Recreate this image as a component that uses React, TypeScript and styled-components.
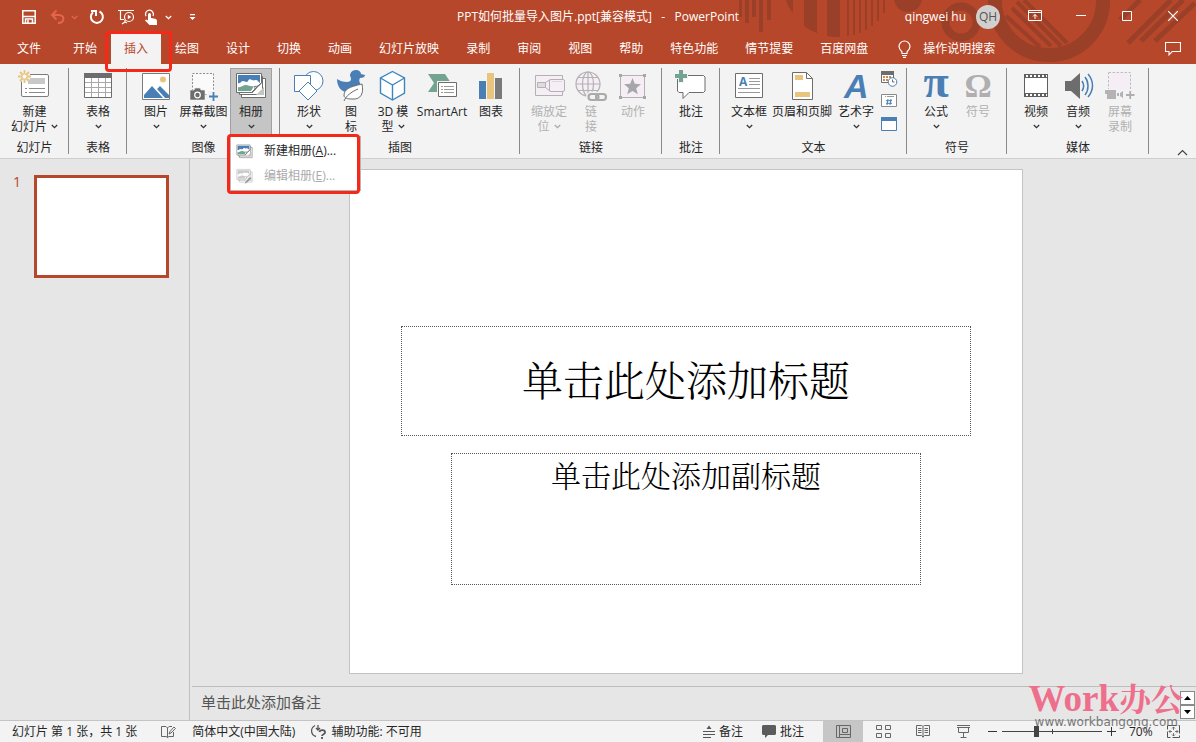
import React from 'react';
import styled, { createGlobalStyle } from 'styled-components';

const brand = '#b7472a';
const brandDark = '#9a3f28';
const blue = '#4a7fb5';
const grey = '#6d6d6d';
const green = '#72a491';
const gold = '#e8c47c';
const faint = '#b4b0b4';
const uiFont = '"Open Sans", "Noto Sans CJK SC", sans-serif';

const GlobalStyle = createGlobalStyle`
  * { box-sizing: border-box; }
  body { margin: 0; background: #e6e6e6; font-family: ${uiFont}; font-size: 12px; line-height: 16px; color: #262626; }
  button, textarea, input { font: inherit; color: inherit; }
  button { background: none; border: 0; padding: 0; cursor: default; white-space: nowrap; }
  svg { display: block; flex: none; }
`;

const Window = styled.div`
  display: flex;
  flex-direction: column;
  height: 100vh;
  min-height: 480px;
  overflow: hidden;
`;

/* ---------- header ---------- */
const Header = styled.header`
  position: relative;
  background: ${brand};
  color: #fff;
`;
const Pattern = styled.svg`
  position: absolute;
  top: 0;
  right: 0;
`;
const TitleBar = styled.div`
  position: relative;
  display: grid;
  grid-template-columns: 1fr auto 1fr;
  height: 33px;
`;
const QuickAccess = styled.div`
  display: flex;
  align-items: center;
  padding-left: 20px;
`;
const QuickButton = styled.button<{ $gap?: number; $dim?: boolean }>`
  margin-right: ${(p) => p.$gap ?? 0}px;
  color: ${(p) => (p.$dim ? '#e2674a' : '#fff')};
`;
const DocTitle = styled.div`
  line-height: 34px;
  white-space: pre;
`;
const WindowControls = styled.div`
  display: flex;
  justify-content: flex-end;
  align-items: center;
`;
const UserName = styled.span`
  margin-right: 10px;
`;
const Avatar = styled.span`
  width: 24px;
  height: 24px;
  margin-right: 12px;
  border-radius: 50%;
  background: #d2d0ce;
  color: #555;
  line-height: 24px;
  text-align: center;
`;
const ControlButton = styled.button`
  display: flex;
  justify-content: center;
  align-items: center;
  width: 46px;
  height: 30px;
  margin-bottom: 3px;
`;
const TabRow = styled.nav`
  position: relative;
  display: flex;
  align-items: stretch;
  gap: 1px;
  height: 31px;
  padding-left: 4px;
`;
const Tab = styled.button<{ $active?: boolean; $first?: boolean }>`
  position: relative;
  padding: 0 13px;
  margin-right: ${(p) => (p.$first ? 5 : 0)}px;
  background: ${(p) => (p.$active ? '#f3f3f3' : 'transparent')};
  color: ${(p) => (p.$active ? brand : '#fff')};
`;
const TabMark = styled.span`
  position: absolute;
  inset: -2px -11px -8px -6px;
  z-index: 3;
  border: 3px solid #f5281a;
  border-radius: 4px;
`;
const SearchButton = styled.button`
  display: flex;
  align-items: center;
  gap: 12px;
  margin-left: 16px;
`;
const CommentToggle = styled.button`
  margin-left: auto;
  padding-right: 15px;
`;

/* ---------- ribbon ---------- */
const Ribbon = styled.section`
  display: flex;
  align-items: flex-start;
  height: 95px;
  flex: none;
  padding-top: 4px;
  background: #f3f3f3;
  border-bottom: 1px solid #cfcfcf;
`;
const Group = styled.div`
  flex: none;
  height: 86px;
  padding: 0 7px 0 8px;
  border-right: 1px solid #8a8a8a;
`;
const Tools = styled.div`
  display: flex;
  height: 68px;
`;
const GroupName = styled.div`
  line-height: 24px;
  text-align: center;
`;
const ToolSlot = styled.div`
  position: relative;
`;
const ToolButton = styled.button<{ $w: number; $active?: boolean; $off?: boolean }>`
  display: flex;
  flex-direction: column;
  align-items: center;
  width: ${(p) => p.$w}px;
  height: 68px;
  background: ${(p) => (p.$active ? '#c5c5c5' : 'transparent')};
  outline: ${(p) => (p.$active ? '1px solid #a0a0a0' : 'none')};
  outline-offset: -1px;
  color: ${(p) => (p.$off ? '#b1b1b1' : 'inherit')};
`;
const ToolLine = styled.span`
  display: flex;
  align-items: center;
  gap: 4px;
  height: 15px;
  line-height: 15px;

  svg + & {
    margin-top: 2px;
  }
`;
const SmallTools = styled.div`
  display: flex;
  flex-direction: column;
  align-items: center;
  gap: 6px;
  width: 21px;
  padding-top: 2px;
`;
const Collapse = styled.button`
  align-self: flex-end;
  margin: 0 8px 2px auto;
`;

/* ---------- drop-down menu ---------- */
const Menu = styled.div`
  position: absolute;
  top: 68px;
  left: 0;
  z-index: 4;
  width: 131px;
  padding: 1px 0 2px;
  background: #fff;
  border: 1px solid #b5b5b5;
`;
const MenuMark = styled.span`
  position: absolute;
  inset: -3px 0 -4px -4px;
  border: 3px solid #f5281a;
  border-radius: 4px;
  pointer-events: none;
`;
const MenuItem = styled.button<{ $off?: boolean }>`
  display: flex;
  align-items: center;
  gap: 11px;
  width: 100%;
  height: 25px;
  padding-left: 5px;
  color: ${(p) => (p.$off ? '#ababab' : '#262626')};
`;

/* ---------- work area ---------- */
const Body = styled.main`
  display: flex;
  flex: 1;
  min-height: 0;
`;
const Thumbnails = styled.aside`
  display: flex;
  align-items: flex-start;
  gap: 13px;
  width: 190px;
  flex: none;
  padding: 16px 20px 0 13px;
  border-right: 1px solid #c0c0c0;
`;
const ThumbNumber = styled.span`
  width: 8px;
  color: ${brand};
  font-size: 14px;
  line-height: 14px;
`;
const Thumb = styled.button`
  flex: 1;
  aspect-ratio: 135 / 103;
  background: #fff;
  border: 3px solid ${brand};
`;
const Editor = styled.div`
  display: flex;
  flex: 1;
  flex-direction: column;
  min-width: 0;
  padding-left: 2px;
`;
const Stage = styled.div`
  display: flex;
  flex: 1;
  justify-content: center;
  min-height: 0;
  padding: 10px 16px 12px 0;
`;
const Slide = styled.div`
  display: grid;
  grid-template-rows: 156fr 110fr 17fr 132fr 88fr;
  height: 100%;
  aspect-ratio: 4 / 3;
  background: #fff;
  border: 1px solid #c3c3c3;
  color: #000;
  text-align: center;
  justify-items: center;
`;
const TitleBox = styled.div`
  grid-row: 2;
  display: grid;
  align-items: center;
  width: 85%;
  padding-bottom: 4px;
  border: 1px dotted #555;
  font-size: 41px;
  line-height: 48px;
  font-weight: 300;
  font-family: "Noto Serif CJK SC", "Noto Sans CJK SC", serif;
`;
const SubtitleBox = styled(TitleBox)`
  grid-row: 4;
  width: 70%;
  align-items: start;
  font-size: 30px;
  line-height: 40px;
`;
const Notes = styled.div`
  display: flex;
  flex: none;
  height: 34px;
  border-top: 1px solid #bdbdbd;
`;
const NotesText = styled.textarea`
  flex: 1;
  height: 32px;
  padding: 4px 9px;
  border: 0;
  background: transparent;
  resize: none;
  font-size: 15px;
  line-height: 22px;
  outline: none;

  &::placeholder {
    color: #555;
    opacity: 1;
  }
`;
const SlideNav = styled.div`
  display: flex;
  flex-direction: column;
  padding: 4px 1px 0 0;
`;
const NavButton = styled.button`
  display: grid;
  place-items: center;
  width: 15px;
  height: 14px;
  background: #fff;
  border: 1px solid #8a8a8a;
`;

/* ---------- status bar ---------- */
const Status = styled.footer`
  display: flex;
  align-items: stretch;
  flex: none;
  height: 22px;
  padding-left: 12px;
  background: #f3f3f3;
  border-top: 1px solid #c4c4c4;
  white-space: nowrap;
`;
const StatusItem = styled.button<{ $gap: number }>`
  display: flex;
  align-items: center;
  gap: 4px;
  margin-right: ${(p) => p.$gap}px;
`;
const Push = styled.span`
  flex: 1;
`;
const ViewButton = styled.button<{ $active?: boolean }>`
  display: grid;
  place-items: center;
  width: 40px;
  background: ${(p) => (p.$active ? '#c6c6c6' : 'transparent')};
`;
const ZoomButton = styled.button`
  display: grid;
  place-items: center;
  width: 19px;
`;
const ZoomSlider = styled.input`
  appearance: none;
  width: 100px;
  margin: 0;
  background:
    linear-gradient(#444, #444) center / 1px 5px no-repeat,
    linear-gradient(#444, #444) center / 100% 1px no-repeat;

  &::-webkit-slider-thumb {
    appearance: none;
    width: 5px;
    height: 11px;
    background: #444;
  }
`;
const ZoomValue = styled.button`
  width: 46px;
  padding-left: 8px;
  text-align: left;
`;
const FitButton = styled.button`
  padding: 0 16px 0 0;
`;

/* ---------- watermark ---------- */
const Watermark = styled.div`
  position: absolute;
  right: 13px;
  bottom: 13px;
  z-index: 5;
  display: flex;
  flex-direction: column;
  align-items: flex-end;
  pointer-events: none;
`;
const WatermarkName = styled.div`
  color: #ee6f8b;
  font: bold 37px/34px "Liberation Serif", serif;
`;
const WatermarkHan = styled.span`
  font: bold 32px/34px "Noto Serif CJK SC", "Noto Sans CJK SC", serif;
`;
const WatermarkUrl = styled.div`
  padding-right: 5px;
  color: #777;
  font: 12px/13px "DejaVu Sans", sans-serif;
`;

/* ---------- icons ---------- */
type Kids = { children: React.ReactNode };
const Big = ({ children }: Kids) => (
  <svg width="36" height="34" viewBox="0 0 36 34" fill="none" overflow="visible">{children}</svg>
);
const Chevron = ({ color = '#333' }: { color?: string }) => (
  <svg width="7" height="5" viewBox="0 0 7 5" fill="none" stroke={color} strokeWidth="1.300"><path d="M.8 1 3.500 3.600 6.200 1" /></svg>
);

const AlbumArt = ({ off }: { off?: boolean }) => {
  const line = off ? faint : grey;
  return (
    <>
      <path d="M8.500 10.500h24v19h-24z" fill="#fff" stroke={line} />
      <path d="M6.500 8.500h23v18h-23z" fill="#fff" stroke={line} />
      <path d="M23 27h8v-8z" fill="#c4c4c4" />
      <path d="M3.500 5.500h25v9l-9 10h-16z" fill="#fff" stroke={line} />
      <path d="M5 7h22v8c-2-1-2-3-4-3s-2 1-4 0-3-1-4 1-3 0-5 0-2 3-5 2z" fill={off ? '#c9c9c9' : blue} />
      <path d="M5 19c3 1 5-2 8-2s4 2 8 1l-3 5H5z" fill={off ? '#c9c9c9' : green} />
      <path d="M18.500 24.500c3-1 4-3 3-6 3 0 6-1 7-4z" fill="#fff" stroke={line} />
      {off && <path d="m19 29 9-10 4 3-9 9-5 2z" fill="#9a9a9a" stroke="#fff" />}
    </>
  );
};

const icons: Record<string, React.ReactNode> = {
  slide: (
    <Big>
      <rect x="4.500" y="6.500" width="27" height="22" rx="1.500" fill="#fff" stroke="#7c7c7c" />
      <path d="M11 10h17v6H11z" fill="#c8c8c8" />
      <path d="M8 20.500h2m2 0h16M8 24.500h2m2 0h16" stroke="#8a8a8a" />
      <circle cx="7.500" cy="8.500" r="6" fill="#f3f3f3" />
      <path d="M7.500 2v13M1 8.500h13M3 4l9 9m0-9-9 9" stroke={gold} strokeWidth="1.800" />
      <circle cx="7.500" cy="8.500" r="2.500" fill="#fff" stroke={gold} />
    </Big>
  ),
  table: (
    <Big>
      <path d="M4.500 5.500h27v24h-27z" fill="#fff" stroke={grey} />
      <path d="M4 5h28v5H4z" fill={grey} />
      <path d="M5 14.500h26M5 19.500h26M5 24.500h26M11.500 10v19M18.500 10v19M25.500 10v19" stroke="#a8a8a8" />
    </Big>
  ),
  picture: (
    <Big>
      <path d="M4.500 5.500h27v26h-27z" fill="#fff" stroke="#7c7c7c" />
      <circle cx="25" cy="11.500" r="3" fill={gold} />
      <path d="M6 30v-3l8-9 11 12zM19 21l3-3 9 9v3h-4z" fill={blue} />
    </Big>
  ),
  screenshot: (
    <Big>
      <path d="M6.500 5.500h21v21h-21z" fill="#fafafa" stroke="#8c8c8c" strokeDasharray="2 1.500" />
      <path d="M22 23h12v11H22z" fill="#f3f3f3" />
      <path d="M4 22h4l1-2h5l1 2h4v10H4z" fill={grey} stroke="#f3f3f3" strokeWidth=".6" />
      <circle cx="11.500" cy="27" r="2.800" stroke="#fff" strokeWidth="1.200" />
      <path d="M23 28.500h9M27.500 24v9" stroke={blue} strokeWidth="1.800" />
    </Big>
  ),
  album: <Big><AlbumArt /></Big>,
  shapes: (
    <Big>
      <circle cx="22.500" cy="13" r="9.500" fill="#fff" stroke={blue} />
      <path d="M3.500 7.500h16v16h-16z" fill="#fff" stroke={blue} />
      <path d="m17 14 9 9-9 9-9-9z" fill="#fff" stroke={blue} />
    </Big>
  ),
  duck: (
    <Big>
      <path d="M17 8c0-4 3-6 6-6 3 0 5 2 5 4l4 1c0 2-2 3-5 3-1 2-1 3 0 5 1 4-2 9-8 9h-5C8 24 4 18 4 11c3 2 6 3 10 3 4 0 5-3 3-6z" fill={blue} />
      <path d="M11 28c0-7 5-9 18-12 2 9-1 16-10 15-5 0-7-1-8-3z" fill="#fff" stroke={grey} />
      <path d="M11 33c2-5 7-9 14-12" stroke={grey} />
    </Big>
  ),
  cube: (
    <Big>
      <path d="m17.500 3.500 12 6.500v15l-12 7-12-7V10z" fill="#fff" stroke="#3f86bd" strokeWidth="1.400" />
      <path d="m5.500 10 12 7 12-7M17.500 17v15" stroke="#3f86bd" strokeWidth="1.400" />
    </Big>
  ),
  smartart: (
    <Big>
      <path d="M4 6h17l6 9-6 9H4l6-9z" fill={green} />
      <path d="M14 14h19v15H14z" fill="#fff" stroke="#f3f3f3" strokeWidth="2" />
      <path d="M14.500 14.500h18v14h-18z" fill="#fff" stroke={grey} />
      <path d="M17 18.500h2m1 0h10M17 21.500h2m1 0h10M17 24.500h2m1 0h10" stroke="#999" />
    </Big>
  ),
  chart: (
    <Big>
      <path d="M6 13h7v18H6z" fill={blue} />
      <path d="M14 5h7v26h-7z" fill={gold} />
      <path d="M22 10h7v21h-7z" fill="#7a7a7a" />
    </Big>
  ),
  zoom: (
    <Big>
      <path d="M4.500 7.500h27v20h-27z" fill="#f5eff5" stroke={faint} />
      <path d="M6.500 14.500h8v5h-8z" fill="#ddd" stroke={faint} />
      <path d="m14.500 14.500 5-3m-5 8 5 4" stroke={faint} />
      <rect x="18.500" y="11.500" width="15" height="12" rx="1.500" fill="#f5eff5" stroke={faint} />
      <path d="M21 13.500h10" stroke="#ddd4dd" />
    </Big>
  ),
  link: (
    <Big>
      <g stroke={faint} strokeWidth="1.200">
        <circle cx="15" cy="16" r="12" fill="#f5eff5" />
        <ellipse cx="15" cy="16" rx="5.500" ry="12" />
        <path d="M15 4v24M3 16h24M5 9.500h20M5 22.500h20" />
      </g>
      <g stroke="#f3f3f3" strokeWidth="5"><rect x="15.500" y="26" width="10" height="6" rx="3" /><rect x="23" y="26" width="10" height="6" rx="3" /></g>
      <g stroke="#aaa" strokeWidth="2.200"><rect x="15.500" y="26" width="10" height="6" rx="3" /><rect x="23" y="26" width="10" height="6" rx="3" /></g>
    </Big>
  ),
  action: (
    <Big>
      <path d="M5.500 7.500h24v22h-24z" fill="#f5eff5" stroke={faint} />
      <path d="M4 6h3v3H4zM28 6h3v3h-3zM4 28h3v3H4zM28 28h3v3h-3z" fill="#a9a6a9" />
      <path d="m17.500 10 2.300 5.800 6.200.4-4.800 4 1.600 6.100-5.300-3.400-5.300 3.400 1.600-6.100-4.800-4 6.200-.4z" fill="#a9a6a9" />
    </Big>
  ),
  comment: (
    <Big>
      <path d="M6.500 7.500h24l1.500 1.500v14l-1.500 1.500H16l-6 6v-6H6L4.500 23V9z" fill="#fff" stroke={grey} />
      <path d="M8 1v14M1 8h14" stroke="#f3f3f3" strokeWidth="6" />
      <path d="M8 2v12M2 8h12" stroke={green} strokeWidth="4" />
    </Big>
  ),
  textbox: (
    <Big>
      <path d="M4.500 5.500h27v24h-27z" fill="#fff" stroke={grey} />
      <text x="8" y="18" fontSize="12" fontWeight="700" fill={blue} fontFamily="Open Sans, sans-serif">A</text>
      <path d="M18 10.500h11M18 13.500h11M18 16.500h11M7 20.500h22M7 24.500h22" stroke="#9a9a9a" />
    </Big>
  ),
  headerFooter: (
    <Big>
      <path d="M8.500 4.500h14l6 6v21h-20z" fill="#fff" stroke={grey} />
      <path d="M22.500 4.500v6h6" stroke={grey} />
      <path d="M11 7h8v5h-8zM11 24h15v5H11z" fill={gold} />
    </Big>
  ),
  wordart: (
    <Big>
      <text x="6" y="30" fontSize="34" fontWeight="700" fontStyle="italic" fill={blue} fontFamily="Liberation Sans, sans-serif">A</text>
    </Big>
  ),
  pi: (
    <Big>
      <text x="18" y="29" fontSize="46" textAnchor="middle" fontWeight="700" fill={blue} fontFamily="Liberation Serif, serif">π</text>
    </Big>
  ),
  omega: (
    <Big>
      <text x="18" y="29" fontSize="34" textAnchor="middle" fontWeight="700" fill="#b0aeb0" fontFamily="Liberation Serif, serif">Ω</text>
    </Big>
  ),
  video: (
    <Big>
      <path d="M6 6h24v23H6z" fill="#5f5f5f" />
      <path d="M7 10h22v15H7z" fill="#fff" />
      <path d="M8 8h21M8 27h21" stroke="#fff" strokeWidth="2" strokeDasharray="2 2" />
    </Big>
  ),
  audio: (
    <Big>
      <path d="M5 13h6l9-8v26l-9-8H5z" fill={grey} />
      <path d="M22 13c2 3 2 7 0 10M25 9c4 5 4 13 0 18M28 6c6 7 6 16 0 23" stroke={blue} strokeWidth="1.500" />
    </Big>
  ),
  record: (
    <Big>
      <path d="M6.500 4.500h22v23h-22z" fill="#f5eff5" stroke="#c0bcc0" strokeDasharray="2.500 1.500" />
      <path d="M2 21h21v12H2zM23 22h11v11H23z" fill="#f3f3f3" />
      <path d="M3 22h11v9H5v-5H3zM15 25h2v3h-2zM18 25l3-2v7l-3-2z" fill="#b5b2b5" />
      <path d="M24 27h8.500M28.200 23v8" stroke="#b0adb0" strokeWidth="1.800" />
    </Big>
  ),
};

/* ---------- data ---------- */
type Tool = { lines: string[]; icon: string; w?: number; arrow?: boolean; off?: boolean; active?: boolean };
type ToolGroup = { name: string; tools: Tool[]; small?: boolean };

const groups: ToolGroup[] = [
  { name: '幻灯片', tools: [{ lines: ['新建', '幻灯片'], icon: 'slide', w: 53, arrow: true }] },
  { name: '表格', tools: [{ lines: ['表格', ''], icon: 'table', arrow: true }] },
  {
    name: '图像',
    tools: [
      { lines: ['图片', ''], icon: 'picture', arrow: true },
      { lines: ['屏幕截图', ''], icon: 'screenshot', w: 53, arrow: true },
      { lines: ['相册', ''], icon: 'album', arrow: true, active: true },
    ],
  },
  {
    name: '插图',
    tools: [
      { lines: ['形状', ''], icon: 'shapes', arrow: true },
      { lines: ['图', '标'], icon: 'duck' },
      { lines: ['3D 模', '型'], icon: 'cube', arrow: true },
      { lines: ['SmartArt'], icon: 'smartart', w: 56 },
      { lines: ['图表'], icon: 'chart' },
    ],
  },
  {
    name: '链接',
    tools: [
      { lines: ['缩放定', '位'], icon: 'zoom', arrow: true, off: true },
      { lines: ['链', '接'], icon: 'link', off: true },
      { lines: ['动作'], icon: 'action', off: true },
    ],
  },
  { name: '批注', tools: [{ lines: ['批注'], icon: 'comment' }] },
  {
    name: '文本',
    small: true,
    tools: [
      { lines: ['文本框', ''], icon: 'textbox', arrow: true },
      { lines: ['页眉和页脚'], icon: 'headerFooter', w: 64 },
      { lines: ['艺术字', ''], icon: 'wordart', w: 44, arrow: true },
    ],
  },
  {
    name: '符号',
    tools: [
      { lines: ['公式', ''], icon: 'pi', arrow: true },
      { lines: ['符号'], icon: 'omega', off: true },
    ],
  },
  {
    name: '媒体',
    tools: [
      { lines: ['视频', ''], icon: 'video', arrow: true },
      { lines: ['音频', ''], icon: 'audio', arrow: true },
      { lines: ['屏幕', '录制'], icon: 'record', off: true },
    ],
  },
];

const tabs = ['文件', '开始', '插入', '绘图', '设计', '切换', '动画', '幻灯片放映', '录制', '审阅', '视图', '帮助', '特色功能', '情节提要', '百度网盘'];

const ToolView = ({ tool }: { tool: Tool }) => (
  <ToolSlot>
    <ToolButton $w={tool.w ?? 42} $active={tool.active} $off={tool.off}>
      {icons[tool.icon]}
      {tool.lines.map((line, i) => (
        <ToolLine key={i}>
          {line && <span>{line}</span>}
          {tool.arrow && i === 1 && <Chevron color={tool.off ? '#aaa' : '#333'} />}
        </ToolLine>
      ))}
    </ToolButton>
    {tool.active && (
      <Menu>
        <MenuItem>
          <svg width="17" height="16" viewBox="2 3 32 28" fill="none"><AlbumArt /></svg>
          <span>新建相册(<u>A</u>)...</span>
        </MenuItem>
        <MenuItem $off>
          <svg width="17" height="16" viewBox="2 3 32 30" fill="none"><AlbumArt off /></svg>
          <span>编辑相册(<u>E</u>)...</span>
        </MenuItem>
        <MenuMark />
      </Menu>
    )}
  </ToolSlot>
);

const TextExtras = () => (
  <SmallTools>
    <button aria-label="日期和时间">
      <svg width="18" height="18" viewBox="0 0 18 18" fill="none">
        <path d="M1.500 1.500h12v11h-12z" fill="#fff" stroke={grey} />
        <path d="M1 1h13v4H1z" fill={grey} />
        <path d="M3 7h2m1 0h2m1 0h2M3 10h2m1 0h2" stroke="#c98b4d" strokeWidth="2" />
        <circle cx="12.500" cy="12" r="4.300" fill="#fff" stroke={blue} />
        <path d="M12.500 9.500V12h2" stroke={grey} />
      </svg>
    </button>
    <button aria-label="幻灯片编号">
      <svg width="16" height="13" viewBox="0 0 16 13" fill="none">
        <path d="M.5.500h15v12H.5z" fill="#fff" stroke="#8a8a8a" />
        <path d="M4 2.500h1m1 0h7" stroke="#999" />
        <path d="M7 5 6 11M10 5 9 11M5 6.700h6M5 9.300h6" stroke={blue} />
      </svg>
    </button>
    <button aria-label="对象">
      <svg width="16" height="22" viewBox="0 0 16 22" fill="none">
        <path d="M.5 4.500h15v13H.5z" fill="#fff" stroke={blue} />
        <path d="M0 4h16v4H0z" fill={blue} />
      </svg>
    </button>
  </SmallTools>
);

const HeaderPattern = () => (
  <Pattern width="466" height="64" viewBox="730 0 466 64" fill={brandDark} aria-hidden="true">
    <path d="M739 0h3v17h-3zM745 0h4v23h-4zM752 0h4v17h-4zM759 0h4v32h-4zM767 0h4v20h-4z" />
    <path d="M786 0h7v13c-3-4-6-8-7-13zM804 0h13v33c-5-2-9-4-13-7zM827 0h13v37c-5 0-9 0-13-1zM847 0h2v36h-2zM853 0h2v35h-2zM859 0h2v33h-2zM865 0h2v30h-2zM871 0h2v26h-2zM877 0h2v21h-2zM883 0h2v13h-2z" />
    <path d="M894 0h28c-2 8-7 12-14 12S896 8 894 0z" />
    <circle cx="961" cy="22" r="15.500" fill="none" stroke={brandDark} strokeWidth="8" />
    <circle cx="1049" cy="1" r="54" fill="none" stroke={brandDark} strokeWidth="14" />
    <path d="m1006 16 34 31m-28-39 39 38m-34-44 44 44m-37-46 43 43" fill="none" stroke={brandDark} strokeWidth="4" />
    <path d="m1120 20 20-20m-12 43 43-43m-30 41 42-41m-28 41 40-38" fill="none" stroke={brandDark} strokeWidth="5" />
  </Pattern>
);

const App = () => (
  <Window>
    <GlobalStyle />
    <Header>
      <HeaderPattern />
      <TitleBar>
        <QuickAccess>
          <QuickButton aria-label="保存" $gap={12}>
            <svg width="18" height="18" viewBox="0 0 18 18" fill="none" stroke="currentColor" strokeWidth="1.500">
              <path d="M2.800 2.800h12.400v12.400H2.800z" />
              <path d="M3 8.500h12" /><path d="M5.500 15v-4h7v4M8 12v3" />
            </svg>
          </QuickButton>
          <QuickButton aria-label="撤消" $gap={4} $dim>
            <svg width="17" height="16" viewBox="0 0 17 16" fill="none" stroke="currentColor" strokeWidth="2">
              <path d="M6.500 1.500 2 6l4.500 4.500M2 6h7c6 0 6 8-1 8" />
            </svg>
          </QuickButton>
          <QuickButton aria-label="撤消选项" $gap={11} $dim><Chevron color="currentColor" /></QuickButton>
          <QuickButton aria-label="重复" $gap={13}>
            <svg width="16" height="16" viewBox="0 0 16 16" fill="none" stroke="currentColor" strokeWidth="2">
              <path d="M2 2h5v5M10.500 2.500a6 6 0 1 1-6.500.8" />
            </svg>
          </QuickButton>
          <QuickButton aria-label="从头开始放映" $gap={9}>
            <svg width="17" height="16" viewBox="0 0 17 16" fill="none" stroke="currentColor" strokeWidth="1.200">
              <path d="M0 1.500h16M2.500 2v8.500H6M7 13v-2M4 15l3-2 2 1" />
              <circle cx="11" cy="8" r="4.500" fill={brand} /><path d="m9.800 5.800 3.400 2.200-3.400 2.200z" fill="currentColor" stroke="none" />
            </svg>
          </QuickButton>
          <QuickButton aria-label="触摸/鼠标模式" $gap={7}>
            <svg width="14" height="17" viewBox="0 0 14 17" fill="currentColor">
              <path d="M4 5.500a1.500 1.500 0 0 1 3 0V9l4 .8c1.300.3 2 1 2 2.200v4H5.500L1 11.500l1-1 2 1z" />
              <path d="M2 7.200A4 4 0 1 1 9 7" fill="none" stroke="currentColor" strokeWidth="1.300" />
            </svg>
          </QuickButton>
          <QuickButton aria-label="模式选项" $gap={17}><Chevron color="currentColor" /></QuickButton>
          <QuickButton aria-label="自定义快速访问工具栏">
            <svg width="7" height="8" viewBox="0 0 7 8" fill="currentColor"><path d="M1 1h5v1.200H1zM.5 4h6l-3 3z" /></svg>
          </QuickButton>
        </QuickAccess>
        <DocTitle>PPT如何批量导入图片.ppt[兼容模式]{'   -   '}PowerPoint</DocTitle>
        <WindowControls>
          <UserName>qingwei hu</UserName>
          <Avatar>QH</Avatar>
          <ControlButton aria-label="功能区显示选项">
            <svg width="14" height="11" viewBox="0 0 14 11" fill="none" stroke="#fff"><path d="M.5.500h13v10H.5zM.5 2.500h13M7 9V4.500M5 6.500l2-2 2 2" /></svg>
          </ControlButton>
          <ControlButton aria-label="最小化">
            <svg width="10" height="10" viewBox="0 0 10 10" stroke="#fff"><path d="M0 4.500h10" /></svg>
          </ControlButton>
          <ControlButton aria-label="最大化">
            <svg width="10" height="10" viewBox="0 0 10 10" fill="none" stroke="#fff"><path d="M.5.500h9v9h-9z" /></svg>
          </ControlButton>
          <ControlButton aria-label="关闭">
            <svg width="10" height="10" viewBox="0 0 10 10" stroke="#fff" strokeWidth="1.200"><path d="m0 0 10 10M10 0 0 10" /></svg>
          </ControlButton>
        </WindowControls>
      </TitleBar>
      <TabRow>
        {tabs.map((name) => (
          <Tab key={name} $first={name === '文件'} $active={name === '插入'}>
            {name}
            {name === '插入' && <TabMark />}
          </Tab>
        ))}
        <SearchButton>
          <svg width="13" height="18" viewBox="0 0 13 18" fill="none" stroke="#fff" strokeWidth="1.200">
            <path d="M4 13.500V12C2 10 1 8.500 1 6.500a5.500 5.500 0 0 1 11 0c0 2-1 3.500-3 5.500v1.500zM4 15.500h5M5 17.400h3" />
          </svg>
          操作说明搜索
        </SearchButton>
        <CommentToggle aria-label="批注">
          <svg width="16" height="15" viewBox="0 0 16 15" fill="none" stroke="#fff" strokeWidth="1.100"><path d="M.5 1.500h15v9H7.200L4 13.800v-3.300H.5z" /></svg>
        </CommentToggle>
      </TabRow>
    </Header>

    <Ribbon>
      {groups.map((group) => (
        <Group key={group.name}>
          <Tools>
            {group.tools.map((tool) => <ToolView key={tool.icon} tool={tool} />)}
            {group.small && <TextExtras />}
          </Tools>
          <GroupName>{group.name}</GroupName>
        </Group>
      ))}
      <Collapse aria-label="折叠功能区">
        <svg width="11" height="7" viewBox="0 0 11 7" fill="none" stroke="#444" strokeWidth="1.200"><path d="m1 6 4.500-4.500L10 6" /></svg>
      </Collapse>
    </Ribbon>

    <Body>
      <Thumbnails>
        <ThumbNumber>1</ThumbNumber>
        <Thumb aria-label="幻灯片 1" />
      </Thumbnails>
      <Editor>
        <Stage>
          <Slide>
            <TitleBox>单击此处添加标题</TitleBox>
            <SubtitleBox>单击此处添加副标题</SubtitleBox>
          </Slide>
        </Stage>
        <Notes>
          <NotesText aria-label="备注" placeholder="单击此处添加备注" />
          <SlideNav>
            <NavButton aria-label="上一张"><svg width="7" height="4" viewBox="0 0 7 4"><path d="M0 4 3.500 0 7 4z" /></svg></NavButton>
            <NavButton aria-label="下一张"><svg width="7" height="4" viewBox="0 0 7 4"><path d="m0 0 3.500 4L7 0z" /></svg></NavButton>
          </SlideNav>
        </Notes>
      </Editor>
    </Body>

    <Status>
      <StatusItem $gap={23}>幻灯片 第 1 张，共 1 张</StatusItem>
      <StatusItem $gap={16} aria-label="拼写检查">
        <svg width="16" height="14" viewBox="0 0 16 14" fill="none" stroke="#666">
          <path d="M7.500 3v9.500L6 11.500H1.500v-10H6L7.500 3l1.500-1.500h3M7.500 12.500 9 11.500h4.500V7" /><path d="m9 9 1-2.500 4-4.500 1.500 1.500L11 8z" />
        </svg>
      </StatusItem>
      <StatusItem $gap={16}>简体中文(中国大陆)</StatusItem>
      <StatusItem $gap={0}>
        <svg width="16" height="15" viewBox="0 0 16 15" fill="none" stroke="#555">
          <path d="M4 1.500C-1 4-.5 11 5 12.500M7 1v5M5 4l2 2 2-2" strokeWidth="1.300" />
          <path d="M8.500 8c.5-2.500 6-2.500 5.500.5 0 2-3 1.500-3 3.500M11 13v2" strokeWidth="1.800" />
        </svg>
        辅助功能: 不可用
      </StatusItem>
      <Push />
      <StatusItem $gap={19}>
        <svg width="12" height="13" viewBox="0 0 12 13" fill="none" stroke="#555"><path d="M0 6.500h12M0 9.500h12M0 12.500h8" /><path d="M6 .5 8.500 4h-5z" fill="#555" stroke="none" /></svg>
        备注
      </StatusItem>
      <StatusItem $gap={19}>
        <svg width="14" height="13" viewBox="0 0 14 13" fill="#5c5c5c"><path d="M1 0h12l1 1v8l-1 1H6l-3 3v-3H1L0 9V1z" /></svg>
        批注
      </StatusItem>
      <ViewButton $active aria-label="普通视图">
        <svg width="15" height="13" viewBox="0 0 15 13" fill="none" stroke="#666"><path d="M.5.500h14v12H.5zM3.500.500v12M6.500 3.500h5v4h-5zM3.500 9.500h11" /></svg>
      </ViewButton>
      <ViewButton aria-label="幻灯片浏览">
        <svg width="15" height="13" viewBox="0 0 15 13" fill="none" stroke="#666"><path d="M.5.500h5v4h-5zM9.500.500h5v4h-5zM.5 8.500h5v4h-5zM9.500 8.500h5v4h-5z" /></svg>
      </ViewButton>
      <ViewButton aria-label="阅读视图">
        <svg width="14" height="13" viewBox="0 0 14 13" fill="none" stroke="#666"><path d="M7 2v10.500M7 1.500 5.500.500h-5v10h5L7 12l1.500-1.500h5v-10h-5zM2 3.500h3.500M2 5.500h3.500M2 7.500h3.500M8.500 3.500H12M8.500 5.500H12M8.500 7.500H12" /></svg>
      </ViewButton>
      <ViewButton aria-label="幻灯片放映">
        <svg width="13" height="13" viewBox="0 0 13 13" fill="none" stroke="#666"><path d="M0 .5h13M0 2.500h13M1.500 3v4.500h10V3M6.500 7.500v5M3.500 12.500h6" /></svg>
      </ViewButton>
      <ZoomButton aria-label="缩小"><svg width="9" height="9" viewBox="0 0 9 9" stroke="#333"><path d="M0 4.500h9" /></svg></ZoomButton>
      <ZoomSlider type="range" min="0" max="100" defaultValue="34" aria-label="缩放" />
      <ZoomButton aria-label="放大"><svg width="9" height="9" viewBox="0 0 9 9" stroke="#333"><path d="M0 4.500h9M4.500 0v9" /></svg></ZoomButton>
      <ZoomValue>70%</ZoomValue>
      <FitButton aria-label="按窗口大小调整">
        <svg width="13" height="13" viewBox="0 0 13 13" fill="none" stroke="#555"><path d="M.5.500h12v12H.5z" strokeDasharray="9 2" /><path d="M6.500 2v3M5 3.500l1.500-1.500L8 3.500M6.500 11V8M5 9.500 6.500 11 8 9.500M2 6.500h3M3.500 5 2 6.500 3.500 8M11 6.500H8M9.500 5 11 6.500 9.500 8" strokeWidth=".8" /></svg>
      </FitButton>
    </Status>

    <Watermark>
      <WatermarkName>Work<WatermarkHan>办公</WatermarkHan></WatermarkName>
      <WatermarkUrl>www.workbangong.com</WatermarkUrl>
    </Watermark>
  </Window>
);

export default App;
